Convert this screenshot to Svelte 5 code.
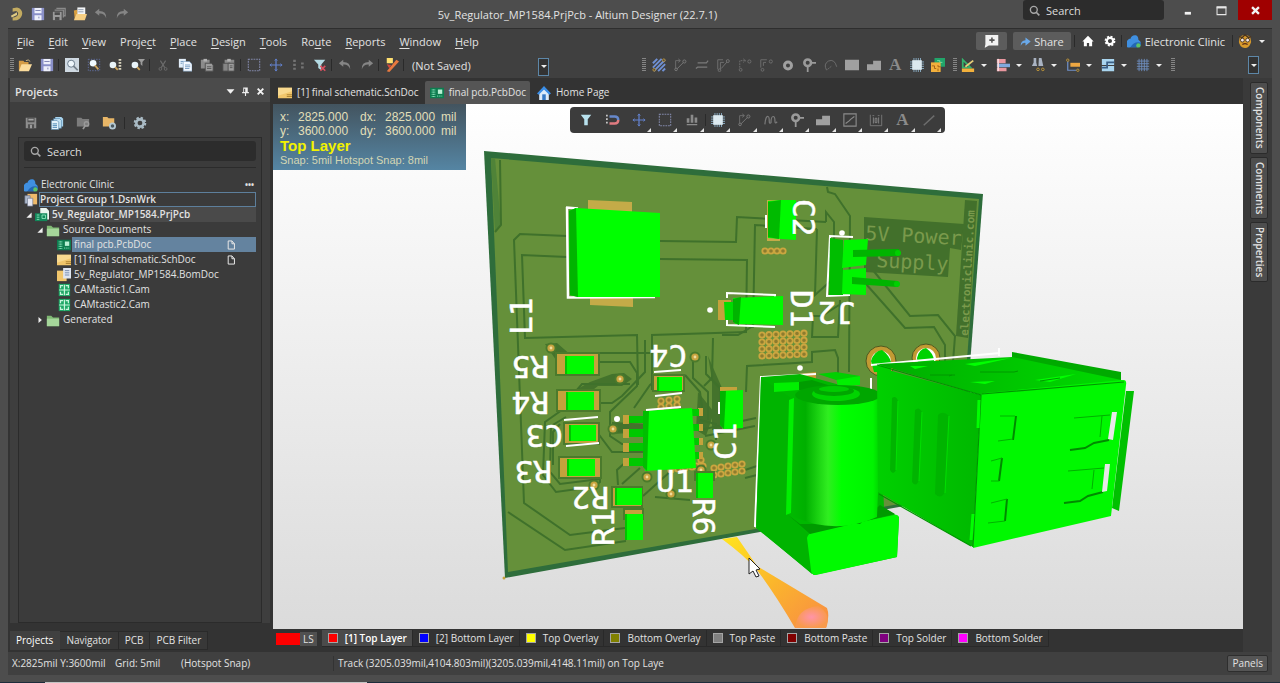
<script>
	const menus = [
		['', 'F', 'ile'], ['', 'E', 'dit'], ['', 'V', 'iew'], ['Proje', 'c', 't'], ['', 'P', 'lace'],
		['', 'D', 'esign'], ['', 'T', 'ools'], ['Ro', 'u', 'te'], ['', 'R', 'eports'], ['', 'W', 'indow'], ['', 'H', 'elp']
	];

	const quick = ['logo', 'save', 'saveall', 'openproj', 'undo', 'redo'];

	// '|' is a separator
	const mainTools = [
		'open', 'save', '|', 'preview', 'zoomarea', 'zoomsel', 'zoomfilter', '|', 'cut', 'copy', 'paste', 'pastespecial', '|',
		'select', 'move', 'deselect', 'clearfilter', '|', 'undo', 'redo', '|', 'wand', '|'
	];
	const placeTools = [
		'hatch', 'route', 'diffpair', 'multiroute', 'arcroute', 'arcroute2', 'pad', 'via', 'arc', 'rect', 'region', 'text', 'chip', 'board'
	];
	const dropTools = ['measure', 'align', 'find', 'dimension', 'room', 'grid'];
	const activeTools = [
		'filter', 'magnet', 'move', 'select', 'bars', '|', 'chip', 'route', 'tune', 'via', 'region', 'chart', 'dim', 'text', 'line'
	];

	const tree = [
		{ name: 'Electronic Clinic', icon: 'cloud', depth: 0, more: true },
		{ name: 'Project Group 1.DsnWrk', icon: 'group', depth: 0, kind: 'boxed' },
		{ name: '5v_Regulator_MP1584.PrjPcb', icon: 'project', depth: 0, arrow: 'open', kind: 'project' },
		{ name: 'Source Documents', icon: 'folder', depth: 1, arrow: 'open' },
		{ name: 'final pcb.PcbDoc', icon: 'pcb', depth: 3, kind: 'selected', doc: true },
		{ name: '[1] final schematic.SchDoc', icon: 'sch', depth: 3, doc: true },
		{ name: '5v_Regulator_MP1584.BomDoc', icon: 'bom', depth: 3 },
		{ name: 'CAMtastic1.Cam', icon: 'cam', depth: 3 },
		{ name: 'CAMtastic2.Cam', icon: 'cam', depth: 3 },
		{ name: 'Generated', icon: 'folder', depth: 1, arrow: 'closed' }
	];

	const docs = [
		{ name: '[1] final schematic.SchDoc', icon: 'sch' },
		{ name: 'final pcb.PcbDoc', icon: 'pcb' },
		{ name: 'Home Page', icon: 'homeblue' }
	];

	const layers = [
		{ name: '[1] Top Layer', color: '#ff0000' },
		{ name: '[2] Bottom Layer', color: '#0000ff' },
		{ name: 'Top Overlay', color: '#ffff00' },
		{ name: 'Bottom Overlay', color: '#808000' },
		{ name: 'Top Paste', color: '#808080' },
		{ name: 'Bottom Paste', color: '#800000' },
		{ name: 'Top Solder', color: '#800080' },
		{ name: 'Bottom Solder', color: '#ff00ff' }
	];

	const panelTabs = ['Projects', 'Navigator', 'PCB', 'PCB Filter'];
	const sideTabs = ['Components', 'Comments', 'Properties'];

	let activeDoc = $state(1);
	let activeLayer = $state(0);
	let activePanel = $state(0);

	// silkscreen designators, rotated around their own start point
	const silk = [
		['L1', 532, 335, -90], ['R5', 549, 356, 180], ['R4', 549, 392, 180], ['C3', 563, 425, 180],
		['R3', 552, 461, 180], ['R2', 609, 487, 180], ['R1', 614, 546, -90], ['C4', 687, 345, 180],
		['U1', 656, 492, 0], ['R6', 693, 498, 90], ['C1', 736, 460, -90], ['C2', 793, 199, 90],
		['D1', 791, 290, 90], ['J2', 855, 302, 180]
	];

	const traces = [
		'M500 160L501 225L495 232', 'M567 236L520 234L514 240L524 503L570 535L625 528', 'M567 257L522 255L525 338L637 335L638 385',
		'M508 512L565 550L626 541', 'M660 241L736 242L737 217L826 222', 'M660 259L747 260L746 331', 'M652 390V335L747 332',
		'M827 187L828 192L835 194L850 216L849 372', 'M817 229L815 295L834 278V222L826 212V222', 'M753 328L755 225L817 229',
		'M713 338L712 378L704 386', 'M722 335L738 335L753 326', 'M839 305L822 316H813L812 337L838 337L840 300',
		'M746 392L747 366L812 362V352L835 350L838 358V378', 'M868 264L910 316L938 315L955 336L953 362',
		'M866 284L905 328L934 327L945 345V362', 'M598 362H630L637 373V386L610 412V436L622 444H645',
		'M600 353H650', 'M560 352L568 357', 'M562 410L545 422L543 475L556 492L592 487', 'M566 417L551 426L550 472L560 484L600 479',
		'M553 465V432L560 424', 'M570 398L582 384H630', 'M600 403H612L622 396L645 372V340', 'M597 432L612 452H645',
		'M615 430L638 434', 'M618 485L617 470L628 460H645', 'M600 470V482L595 486', 'M622 484L640 468', 'M643 496L672 470',
		'M655 497L690 500', 'M634 408L650 385L662 376', 'M685 375L700 392L702 408', 'M693 360V378L708 392V420', 'M706 356V374L720 388V400',
		'M700 430L756 418', 'M705 436L755 426', 'M745 470L757 466', 'M745 478L757 475', 'M700 420L716 424V440'
	];

	const vias = [
		[551, 348], [620, 379], [613, 429], [647, 477], [695, 357], [711, 445], [671, 494], [594, 485], [701, 470]
	];

	const dots = [];
	for (let r = 0; r < 4; r++) for (let c = 0; c < 7; c++) dots.push([762 + c * 7, 335 + r * 7 - c * 0.3]);
	for (let c = 0; c < 4; c++) dots.push([765 + c * 6, 251]);
	for (let r = 0; r < 2; r++) for (let c = 0; c < 5; c++) dots.push([714 + c * 7, 468 + r * 7 - c]);
	for (let r = 0; r < 2; r++) for (let c = 0; c < 3; c++) dots.push([661 + c * 8, 401 + r * 6 - c]);
	for (let c = 0; c < 5; c++) dots.push([671 + c * 7, 470 - c]);
	dots.push([701, 460], [696, 466], [703, 466]);

	// small parts: pad rect, body rect
	const parts = [
		[[557, 354, 41, 20], [565, 356, 29, 18]], [[558, 391, 41, 19], [566, 392, 28, 18]],
		[[565, 424, 33, 19], [569, 425, 27, 16]], [[560, 458, 40, 19], [567, 459, 28, 17]],
		[[613, 488, 28, 18], [615, 488, 27, 17]], [[625, 510, 17, 8], [625, 514, 18, 26]],
		[[654, 376, 29, 14], [657, 377, 25, 14]], [[696, 473, 17, 6], [696, 473, 17, 25]]
	];
</script>

{#snippet icon(name)}
	<svg class="icon" viewBox="0 0 16 16" aria-hidden="true"><use href="#i-{name}" /></svg>
{/snippet}

{#snippet tool(name)}
	{#if name === '|'}
		<span class="sep"></span>
	{:else if name === 'text'}
		<button class="tool letter">A</button>
	{:else}
		<button class="tool" aria-label={name}>{@render icon(name)}</button>
	{/if}
{/snippet}

<svg class="sprite" aria-hidden="true">
	<symbol id="i-logo" viewBox="0 0 16 16"><path d="M3 1.500L8 .5C16 2 16 12 8 15L3 15.500V12C10 11.500 11 6 7 4.500L3 5.500Z" fill="#c3ab60" /><path d="M1 10L8 6V9L2 12Z" fill="#e0cb83" /></symbol>
	<symbol id="i-save" viewBox="0 0 16 16"><path d="M1 1H15V15H1Z" fill="#8a90c8" /><path d="M4 1H12V7H4ZM4 9.500H12V15H4Z" fill="#eef0fb" /><path d="M5 4H11M9 11V13" stroke="#767cae" /></symbol>
	<symbol id="i-savegrey" viewBox="0 0 16 16"><path d="M2 2H14V14H2Z" fill="#8d8d8d" /><path d="M4 2H12V7H4ZM4.500 9.500H11.500V14H4.500Z" fill="#505050" /><path d="M5 4H11M8 10V14" stroke="#a5a5a5" stroke-width="2" /></symbol>
	<symbol id="i-saveall" viewBox="0 0 16 16"><path d="M5 1.500H15V10H13M3 3.500H13V12" fill="none" stroke="#8b8b8b" stroke-width="1.500" /><path d="M1 5.500H11V15H1Z" fill="#9a9a9a" /><path d="M3 6H9V9H3ZM3.500 11.500H8.500V15H3.500Z" fill="#4c4c4c" /></symbol>
	<symbol id="i-openproj" viewBox="0 0 16 16"><path d="M1 4L5 3L6 14H2Z" fill="#d99f3f" /><path d="M5 .5H14V9H5Z" fill="#f4f6f8" /><path d="M6 3H12M6 5.500H12" stroke="#8b98a8" /><path d="M4 8H16L13.500 15H1Z" fill="#f7cf82" /></symbol>
	<symbol id="i-open" viewBox="0 0 16 16"><path d="M1 3H6L7.500 4.500H12V14H1Z" fill="#d39b45" /><path d="M9 3Q12 1 14 4" stroke="#d8c08a" fill="none" /><path d="M4 7H16L12.500 15H1Z" fill="#fbdc9c" /></symbol>
	<symbol id="i-undo" viewBox="0 0 16 16"><path d="M6 2L1 6L6 10V7.500Q12 7 14 13Q14.500 4.500 6 4.500Z" fill="#858585" /></symbol>
	<symbol id="i-redo" viewBox="0 0 16 16"><path d="M10 2L15 6L10 10V7.500Q4 7 2 13Q1.500 4.500 10 4.500Z" fill="#858585" /></symbol>
	<symbol id="i-preview" viewBox="0 0 16 16"><path d="M0 0H16V16H0Z" fill="#cfd9e2" /><circle cx="7" cy="6.500" r="4" fill="#eef6fb" stroke="#5d6f80" /><path d="M9.500 9L14.500 14" stroke="#75808a" stroke-width="2" /></symbol>
	<symbol id="i-zoomarea" viewBox="0 0 16 16"><path d="M1.500 1.500H14.500V14.500H1.500Z" fill="none" stroke="#6472a8" stroke-dasharray="1.500" /><circle cx="7" cy="6" r="3.800" fill="#f2fbff" /><path d="M9 8.500L13 13" stroke="#cfa65d" stroke-width="2" /></symbol>
	<symbol id="i-zoomsel" viewBox="0 0 16 16"><circle cx="4.500" cy="8" r="3.800" fill="#e9f4f9" /><path d="M7 10.500L10 13.500" stroke="#cfa65d" stroke-width="2" /><path d="M12.500 1V15" stroke="#d7d2bd" stroke-width="3" stroke-dasharray="2 1.500" /></symbol>
	<symbol id="i-zoomfilter" viewBox="0 0 16 16"><circle cx="4.500" cy="8" r="3.800" fill="#e9f4f9" /><path d="M7 10.500L10 13.500" stroke="#cfa65d" stroke-width="2" /><path d="M8 1H16L13 4.500V9L11 7V4.500Z" fill="#9d9d9d" /></symbol>
	<symbol id="i-cut" viewBox="0 0 16 16"><path d="M5 3L10 11M11 3L6 11" stroke="#6c6c6c" stroke-width="1.300" /><circle cx="5" cy="12.500" r="1.600" fill="none" stroke="#6c6c6c" /><circle cx="11" cy="12.500" r="1.600" fill="none" stroke="#6c6c6c" /></symbol>
	<symbol id="i-copy" viewBox="0 0 16 16"><path d="M1 1H9V11H1Z" fill="#e2eef9" /><path d="M6 4H13L16 7V15H6Z" fill="#f4f9ff" stroke="#6b93bb" stroke-width=".6" /><path d="M3 4H6M3 6H5M8 8H14M8 10H14M8 12H13" stroke="#6b93bb" /></symbol>
	<symbol id="i-paste" viewBox="0 0 16 16"><path d="M1 2H11V12H1Z" fill="#8b8b8b" /><path d="M4 1H8V4H4Z" fill="#b0b0b0" /><path d="M6 6H13L15 8V15H6Z" fill="#9d9d9d" stroke="#4c4c4c" /><path d="M8 10H13M8 12H13" stroke="#555" /></symbol>
	<symbol id="i-pastespecial" viewBox="0 0 16 16"><path d="M3 2H14V10H3Z" fill="#8b8b8b" /><path d="M6 1H10V4H6Z" fill="#b0b0b0" /><path d="M1 6H9V15H1Z" fill="#858585" stroke="#4c4c4c" /><path d="M7 6H14V15H7Z" fill="#9d9d9d" stroke="#4c4c4c" /><path d="M9 9H12M9 11H12" stroke="#555" /></symbol>
	<symbol id="i-select" viewBox="0 0 16 16"><path d="M1.500 1.500H14.500V14.500H1.500Z" fill="none" stroke="currentColor" stroke-width="1.200" stroke-dasharray="2 1" /></symbol>
	<symbol id="i-move" viewBox="0 0 16 16"><path d="M8 1.500V14.500M1.500 8H14.500" stroke="#6482cf" stroke-width="1.400" /><path d="M6.500 3L8 1L9.500 3M6.500 13L8 15L9.500 13M3 6.500L1 8L3 9.500M13 6.500L15 8L13 9.500" fill="none" stroke="#6482cf" /></symbol>
	<symbol id="i-deselect" viewBox="0 0 16 16"><path d="M4 2V15M13 5V14" stroke="#737373" stroke-width="3" stroke-dasharray="2.500 2" /></symbol>
	<symbol id="i-clearfilter" viewBox="0 0 16 16"><path d="M1 2H14L9.500 7.500V14L6 11.500V7.500Z" fill="#b4dbe4" /><path d="M8.500 9L14 14.500M14 9L8.500 14.500" stroke="#d9505f" stroke-width="1.800" /></symbol>
	<symbol id="i-wand" viewBox="0 0 16 16"><path d="M2 0H9V6H2Z" fill="#ffe070" /><path d="M16 4L13 2L2 15L5 16Z" fill="#e8793f" /><path d="M2 7L7 8L5 12Z" fill="#d34a3c" /></symbol>
	<symbol id="i-hatch" viewBox="0 0 16 16"><path d="M1 6L6 1M1 11L11 1M2 15L15 2M7 15L15 7M12 15L15 12" stroke="#6f90d4" stroke-width="2.200" /><circle cx="13.500" cy="2.500" r="1.500" fill="#404040" stroke="#c59a3a" /><circle cx="2.500" cy="13.500" r="1.500" fill="#404040" stroke="#c59a3a" /></symbol>
	<symbol id="i-route" viewBox="0 0 16 16"><path d="M3 13V3H8M6 1L8.500 3L6 5" fill="none" stroke="#717171" /><path d="M4 13L13 4" stroke="#7c7c7c" /><circle cx="13" cy="4" r="1.800" fill="#444" stroke="#7c7c7c" /><circle cx="3.500" cy="13" r="1.500" fill="#444" stroke="#7c7c7c" /></symbol>
	<symbol id="i-diffpair" viewBox="0 0 16 16"><path d="M3 5.500H13L15 3M1 12L3 10.500H14" fill="none" stroke="#7a7a7a" stroke-width="1.400" /></symbol>
	<symbol id="i-multiroute" viewBox="0 0 16 16"><path d="M2 13V2H8M5 13V5H9M6 12L13 4" fill="none" stroke="#757575" /><circle cx="13.500" cy="3.500" r="1.700" fill="#444" stroke="#757575" /><circle cx="4" cy="14" r="1.500" fill="#444" stroke="#757575" /></symbol>
	<symbol id="i-arcroute" viewBox="0 0 16 16"><path d="M2 11V3H8M6 1L9 3L6 5" fill="none" stroke="#717171" stroke-dasharray="2 1" /><circle cx="13" cy="4" r="1.800" fill="none" stroke="#717171" /><circle cx="3" cy="13.500" r="1.600" fill="none" stroke="#717171" /></symbol>
	<symbol id="i-arcroute2" viewBox="0 0 16 16"><path d="M2 11V2H9M5 9V5H8" fill="none" stroke="#717171" /><circle cx="13.500" cy="4" r="1.800" fill="none" stroke="#717171" /><circle cx="4" cy="13.500" r="1.600" fill="none" stroke="#717171" /></symbol>
	<symbol id="i-pad" viewBox="0 0 16 16"><circle cx="8" cy="8.500" r="4" fill="none" stroke="#a0a0a0" stroke-width="3.400" /></symbol>
	<symbol id="i-via" viewBox="0 0 16 16"><circle cx="6.500" cy="5.500" r="3.800" fill="none" stroke="#9a9a9a" stroke-width="3" /><path d="M10 5.500H16M6.500 9V16" stroke="#9a9a9a" stroke-width="2" /></symbol>
	<symbol id="i-arc" viewBox="0 0 16 16"><path d="M3 14Q-1 7 5 3.500Q12 .5 14.500 10" fill="none" stroke="#717171" /><path d="M4 13L9 9" stroke="#717171" stroke-dasharray="2 1" /></symbol>
	<symbol id="i-rect" viewBox="0 0 16 16"><path d="M0 2H16V14H0Z" fill="#a0a0a0" /></symbol>
	<symbol id="i-region" viewBox="0 0 16 16"><path d="M0 7H7V3H16V14H0Z" fill="#a0a0a0" /></symbol>
	<symbol id="i-chip" viewBox="0 0 16 16"><path d="M0 4.500H16M0 7H16M0 9.500H16M0 12H16M4.500 0V16M7 0V16M9.500 0V16M12 0V16" stroke="#8fb4cc" /><path d="M2.500 2.500H13.500V13.500H2.500Z" fill="#dce9ef" /></symbol>
	<symbol id="i-board" viewBox="0 0 16 16"><path d="M4 0H16V10H4Z" fill="#22a56a" /><path d="M7 3H10V5H13" stroke="#7fe0b0" fill="none" /><path d="M0 5H11V16H0Z" fill="#f3b03c" /><path d="M1 9H4V12H6M11 10H8V8M8 15V12" stroke="#9c5d14" fill="none" /></symbol>
	<symbol id="i-measure" viewBox="0 0 16 16"><path d="M2 2V11H11Z" fill="none" stroke="#35b26c" stroke-width="2" /><path d="M5 10L14 3" stroke="#e8cf7a" stroke-width="2" /><path d="M1 12H15V16H1Z" fill="#f3b13c" /></symbol>
	<symbol id="i-align" viewBox="0 0 16 16"><path d="M1 1H11V6H1ZM1 11H12V15H1Z" fill="#e9979f" /><path d="M1 6.500H16V10.500H1Z" fill="#7fa9dd" /><path d="M2.500 1V15" stroke="#f5d7da" stroke-width="2" /></symbol>
	<symbol id="i-find" viewBox="0 0 16 16"><path d="M3 0H6V5L7 9H1L3 5ZM9 0H12L14 9H8.500Z" fill="#a9b3c2" /><circle cx="8" cy="13" r="1.500" fill="none" stroke="#c59a3a" /><circle cx="13.500" cy="13" r="1.500" fill="none" stroke="#c59a3a" /></symbol>
	<symbol id="i-dimension" viewBox="0 0 16 16"><path d="M2 3V14H12" fill="none" stroke="#6f90c8" stroke-width="1.400" /><path d="M5 5.500H16V10H5Z" fill="#eea742" /><circle cx="2" cy="2.500" r="1.400" fill="#404040" stroke="#c59a3a" /><circle cx="13.500" cy="14" r="1.400" fill="#404040" stroke="#c59a3a" /></symbol>
	<symbol id="i-room" viewBox="0 0 16 16"><path d="M1 1H15V8H1ZM1 9H15V15H1Z" fill="#a9d5ef" /><path d="M15 5H7V11H1" stroke="#3b5f86" stroke-width="2" fill="none" /></symbol>
	<symbol id="i-grid" viewBox="0 0 16 16"><path d="M1 3.500H15M1 6.500H15M1 9.500H15M1 12.500H15M3.500 1V15M6.500 1V15M9.500 1V15M12.500 1V15" stroke="#6f8fc0" /></symbol>
	<symbol id="i-filter" viewBox="0 0 16 16"><path d="M2 2H14L10 7V14H6V7Z" fill="#b9e2ee" /></symbol>
	<symbol id="i-magnet" viewBox="0 0 16 16"><path d="M1 2V14" stroke="#c8c8c8" stroke-width="2" stroke-dasharray="2" /><path d="M4 4H10Q14 4 14 8" fill="none" stroke="#6688cc" stroke-width="2.800" /><path d="M14 8Q14 12 10 12H4" fill="none" stroke="#e07b80" stroke-width="2.800" /></symbol>
	<symbol id="i-bars" viewBox="0 0 16 16"><path d="M2 6H5V11H2ZM6.500 2H9.500V11H6.500ZM11 5H14V11H11ZM2 12.500H14V14H2Z" fill="#8b8b8b" /></symbol>
	<symbol id="i-tune" viewBox="0 0 16 16"><path d="M1 13Q2 3 4.500 4Q6 4 6 9Q6 13 8 11Q8 4 10.500 4Q12.500 4 12.500 9Q12.500 13 15 10" fill="none" stroke="#7b7b7b" stroke-width="1.400" /></symbol>
	<symbol id="i-chart" viewBox="0 0 16 16"><path d="M1 1H15V15H1Z" fill="none" stroke="#8b8b8b" stroke-width="1.300" /><path d="M3 12L7 9L9 7L13 4" stroke="#8b8b8b" stroke-width="1.400" fill="none" /></symbol>
	<symbol id="i-dim" viewBox="0 0 16 16"><path d="M1.500 2V14.500H14.500V2M4 3H6M10 3H12" fill="none" stroke="#7b7b7b" /><path d="M5 5V12M11 5V12M7 6H9V11H7Z" fill="none" stroke="#8b8b8b" /></symbol>
	<symbol id="i-line" viewBox="0 0 16 16"><path d="M2 14L14 3" stroke="#6d6d6d" stroke-width="1.600" /></symbol>
	<symbol id="i-search" viewBox="0 0 16 16"><circle cx="7" cy="7" r="5" fill="none" stroke="#a8a8a8" stroke-width="2" /><path d="M10.500 10.500L15 15" stroke="#a8a8a8" stroke-width="2.400" /></symbol>
	<symbol id="i-docs" viewBox="0 0 16 16"><path d="M6 1H13L15 3V12H6Z" fill="#a8d4ef" /><path d="M4 3H11L13 5V14H4Z" fill="#c4e4f6" stroke="#4b7da3" stroke-width=".7" /><path d="M1.500 5H8L10 7V15.500H1.500Z" fill="#e3f3fc" stroke="#4b7da3" stroke-width=".7" /><path d="M3 9H8M3 11H8M3 13H8" stroke="#3f7fae" /></symbol>
	<symbol id="i-foldergrey" viewBox="0 0 16 16"><path d="M1 2H6L7.500 3.500H15V12H1Z" fill="#7c7c7c" /><circle cx="12" cy="9" r="2.500" fill="none" stroke="#9a9a9a" stroke-width="1.600" /><path d="M10.500 11L8 15" stroke="#9a9a9a" stroke-width="2" /></symbol>
	<symbol id="i-foldergear" viewBox="0 0 16 16"><path d="M1 1H6L7.500 2.500H14V12H1Z" fill="#e8b667" /><circle cx="12" cy="11.500" r="3" fill="#4b5960" stroke="#b5c9d3" stroke-width="2" /></symbol>
	<symbol id="i-gear" viewBox="0 0 16 16"><circle cx="8" cy="8" r="6" fill="none" stroke="currentColor" stroke-width="2.400" stroke-dasharray="2.700 2" /><circle cx="8" cy="8" r="4.200" fill="none" stroke="currentColor" stroke-width="3" /></symbol>
	<symbol id="i-home" viewBox="0 0 16 16"><path d="M8 1L15.500 8.500H13.500V15H9.500V10.500H6.500V15H2.500V8.500H.5Z" fill="#fff" /></symbol>
	<symbol id="i-homeblue" viewBox="0 0 16 16"><path d="M2.500 8V16H13.500V8L8 3Z" fill="#dcebfa" /><path d="M8 0L16 8.500L14 10L8 4L2 10L0 8.500Z" fill="#3a8ee8" /><path d="M6 9.500H10V16H6Z" fill="#3678c4" /></symbol>
	<symbol id="i-cloud" viewBox="0 0 16 16"><path d="M4 15A4 4 0 0 1 1 7Q2 5 4 5.500Q5 1 10 1.500Q13 2.500 13 6.500Q16 8 16 11Q15 15 12 15Z" fill="#3f8fe0" /><path d="M4 15Q8 8 16 10Q16 15 12 15Z" fill="#2467b3" /><circle cx="13" cy="13" r="2.500" fill="#5dc266" /></symbol>
	<symbol id="i-share" viewBox="0 0 16 16"><path d="M1 14Q1 6.500 8 6V2L15.500 8L8 14V10Q3 9.500 1 14Z" fill="#6aa9ea" /></symbol>
	<symbol id="i-note" viewBox="0 0 16 16"><path d="M1 1H16V13H5L0 16L1 12Z" fill="#f2f2f2" /><path d="M8.500 4V10M5.500 7H11.500" stroke="#555" stroke-width="1.800" /></symbol>
	<symbol id="i-face" viewBox="0 0 16 16"><path d="M2 3Q8 -1 14 3L15 9Q13 16 8 16Q2 15 1 9Z" fill="#d99a2b" /><path d="M1 3L5 4L8 1L12 4L15 3" stroke="#4a3520" stroke-width="1.600" fill="none" /><circle cx="5" cy="7" r="2.200" fill="#f6e8e6" stroke="#40301c" /><circle cx="11" cy="7" r="2.200" fill="#f6e8e6" stroke="#40301c" /><path d="M5 12Q8 10 11 12" stroke="#5a2c16" fill="none" stroke-width="1.400" /></symbol>
	<symbol id="i-group" viewBox="0 0 16 16"><path d="M4 1H15V13H4Z" fill="#eeba6a" /><path d="M1 3H7V12H1Z" fill="#aeb9cc" stroke="#68718a" stroke-width=".7" /><path d="M4 6H10V15H4Z" fill="#e4e7f2" stroke="#68718a" stroke-width=".7" /></symbol>
	<symbol id="i-project" viewBox="0 0 16 16"><path d="M6 0H13L16 3V13H6Z" fill="#eaf4ee" /><path d="M0 6H14V15H0Z" fill="#13875a" /><path d="M2 8H5M2 10.500H5M2 13H5M8 8H12V12H8Z" stroke="#8de6bd" fill="none" /></symbol>
	<symbol id="i-folder" viewBox="0 0 16 16"><path d="M1 3H6L8 5H15V15H1Z" fill="#7fb873" /><path d="M1 6.500H15V15H1Z" fill="#a5d69a" /></symbol>
	<symbol id="i-pcb" viewBox="0 0 16 16"><path d="M0 2H16V14H0Z" fill="#0d7c4f" /><path d="M2 4.500H6M2 7H6M2 9.500H6M2 12H6" stroke="#8de6bd" stroke-width="1.300" stroke-dasharray="1 .5" /><path d="M9 4H14V9H9Z" fill="#b9f0d4" /><path d="M8 11.500H14" stroke="#8de6bd" stroke-dasharray="1.500 1" /></symbol>
	<symbol id="i-sch" viewBox="0 0 16 16"><path d="M0 2H16V14H0Z" fill="#f1c66b" /><path d="M0 2H16V6L0 11Z" fill="#f8d98f" /><path d="M10 10H16M10 12H16" stroke="#a57b2c" /></symbol>
	<symbol id="i-bom" viewBox="0 0 16 16"><path d="M0 3H11V15H0Z" fill="#f1c66b" /><path d="M7 0H16V12H7Z" fill="#dfe6f1" /><path d="M9 3H14M9 5.500H14M9 8H14" stroke="#6d83a8" /></symbol>
	<symbol id="i-cam" viewBox="0 0 16 16"><path d="M2 1H15V15H2Z" fill="#1fa765" /><path d="M4 6V3H7M10 3H13V6M4 10V13H7M13 10V13H10" fill="none" stroke="#c8f5dc" stroke-width="1.400" /><path d="M8.500 2V14M2.500 8H14.500" stroke="#c8f5dc" stroke-width="1.400" /></symbol>
	<symbol id="i-doc" viewBox="0 0 16 16"><path d="M3.500 1.500H9.500L13.500 6V14.500H3.500ZM9.500 1.500V6H13.500" fill="none" stroke="#e6e6e6" stroke-width="1.600" /></symbol>
	<symbol id="i-pin" viewBox="0 0 16 16"><path d="M4 1H12V9H14V11H9V16H7V11H2V9H4Z" fill="#eee" /><path d="M6.500 3V9" stroke="#4b4b4b" stroke-width="2" /></symbol>
	<symbol id="i-close" viewBox="0 0 16 16"><path d="M3 3L13 13M13 3L3 13" stroke="#f2f2f2" stroke-width="3.400" /></symbol>
	<symbol id="i-down" viewBox="0 0 16 16"><path d="M1 4H15L8 12Z" fill="#f2f2f2" /></symbol>
	<symbol id="i-min" viewBox="0 0 16 16"><path d="M4 12H13" stroke="#f2f2f2" stroke-width="4" /></symbol>
	<symbol id="i-max" viewBox="0 0 16 16"><path d="M1.500 3V14H14.500V3Z" fill="none" stroke="#e6e6e6" stroke-width="1.500" /><path d="M1 3.500H15" stroke="#e6e6e6" stroke-width="3" /></symbol>
	<symbol id="i-open-arrow" viewBox="0 0 16 16"><path d="M15 1V15H1Z" fill="#f0f0f0" /></symbol>
	<symbol id="i-closed-arrow" viewBox="0 0 16 16"><path d="M4 0L13 8L4 16Z" fill="#f0f0f0" /></symbol>
</svg>

<div class="window">
	<header class="titlebar">
		<div class="quick">
			{#each quick as name}{@render tool(name)}{/each}
		</div>
		<h1>5v_Regulator_MP1584.PrjPcb - Altium Designer (22.7.1)</h1>
		<label class="search top-search">
			{@render icon('search')}
			<input type="text" placeholder="Search" aria-label="Search everywhere" />
		</label>
		<div class="win-buttons">
			<button aria-label="Minimize">{@render icon('min')}</button>
			<button aria-label="Maximize">{@render icon('max')}</button>
			<button class="win-close" aria-label="Close">{@render icon('close')}</button>
		</div>
	</header>

	<div class="app">
		<nav class="menubar">
			{#each menus as [a, key, b]}
				<button class="menu">{a}<u>{key}</u>{b}</button>
			{/each}
			<div class="account">
				<button class="pill" aria-label="Comment">{@render icon('note')}</button>
				<button class="pill share">{@render icon('share')} Share</button>
				<span class="sep"></span>
				<button class="tool" aria-label="Home">{@render icon('home')}</button>
				<button class="tool" aria-label="Settings">{@render icon('gear')}</button>
				<span class="sep"></span>
				<button class="server">{@render icon('cloud')} Electronic Clinic</button>
				<span class="sep"></span>
				<button class="user" aria-label="User">{@render icon('face')}<span class="caret"></span></button>
			</div>
		</nav>

		<div class="toolbar">
			<span class="grip"></span>
			<div class="tools">
				{#each mainTools as name}{@render tool(name)}{/each}
			</div>
			<label class="combo">
				<select aria-label="View">
					<option>(Not Saved)</option>
				</select>
				<span class="combo-arrow"><span class="caret"></span></span>
			</label>
			<div class="right-tools">
				<span class="grip"></span>
				<div class="place">
					{#each placeTools as name}{@render tool(name)}{/each}
				</div>
				<span class="grip"></span>
				<div class="drops">
					{#each dropTools as name}
						<button class="drop" aria-label={name}>{@render icon(name)}<span class="caret"></span></button>
					{/each}
				</div>
				<span class="grip"></span>
			</div>
			<button class="combo-arrow" aria-label="More"><span class="caret"></span></button>
		</div>

		<div class="work">
			<aside class="panel">
				<div class="panel-head">
					<h2>Projects</h2>
					<button aria-label="Menu">{@render icon('down')}</button>
					<button aria-label="Pin">{@render icon('pin')}</button>
					<button aria-label="Close panel">{@render icon('close')}</button>
				</div>
				<div class="panel-body">
					<div class="panel-tools">
						{@render tool('savegrey')}
						{@render tool('docs')}
						{@render tool('foldergrey')}
						{@render tool('foldergear')}
						<span class="sep"></span>
						{@render tool('gear')}
					</div>
					<div class="panel-box">
						<label class="search">
							{@render icon('search')}
							<input type="text" placeholder="Search" aria-label="Search projects" />
						</label>
						<ul class="tree">
							{#each tree as row}
								<li style="padding-left: {row.depth * 11}px">
									{#if row.arrow}
										<span class="twist">{@render icon(row.arrow + '-arrow')}</span>
									{/if}
									{@render icon(row.icon)}
									<span class="name {row.kind}">
										{row.name}
										{#if row.doc}{@render icon('doc')}{/if}
										{#if row.more}<b>•••</b>{/if}
									</span>
								</li>
							{/each}
						</ul>
					</div>
				</div>
				<div class="panel-tabs">
					{#each panelTabs as name, i}
						<button class:active={activePanel === i} onclick={() => (activePanel = i)}>{name}</button>
					{/each}
				</div>
			</aside>

			<main>
				<div class="doc-tabs">
					{#each docs as doc, i}
						<button class:active={activeDoc === i} onclick={() => (activeDoc = i)}>{@render icon(doc.icon)}{doc.name}</button>
					{/each}
				</div>

				<div class="canvas">
					<svg class="scene" viewBox="273 104 970 524" preserveAspectRatio="xMinYMin meet" role="img" aria-label="3D view of the board">
						<defs>
							<linearGradient id="cyl"><stop offset="0" stop-color="#00b800" /><stop offset=".15" stop-color="#00b000" /><stop offset=".4" stop-color="#30ee20" /><stop offset=".55" stop-color="#00ff00" /><stop offset=".9" stop-color="#00f400" /><stop offset="1" stop-color="#00c800" /></linearGradient>
							<linearGradient id="cone" x1="0" y1="0" x2="1" y2="1"><stop offset="0" stop-color="#ffe51e" /><stop offset=".5" stop-color="#fbb52c" /><stop offset="1" stop-color="#f88b45" /></linearGradient>
							<radialGradient id="tip"><stop offset="0" stop-color="#ff94a8" /><stop offset="1" stop-color="#f99a4c" /></radialGradient>
							<linearGradient id="side"><stop offset="0" stop-color="#00d000" /><stop offset="1" stop-color="#00b800" /></linearGradient>
							<linearGradient id="lid"><stop offset="0" stop-color="#00ac00" /><stop offset="1" stop-color="#00dc00" /></linearGradient>
						</defs>

						<!-- board and copper -->
						<path d="M484 151L983 194L960 496L505 578Z" fill="#2e6d3b" />
						<path d="M491 158L979 199L957 494L508 572Z" fill="#65903a" />
						<path d="M491 158L495 158L501 226L495 232Z" fill="#4f8338" />
						<path d="M612 374L624 373L632 379L622 386H598L585 396H565L590 382ZM612 422L650 424V432L612 434ZM545 344L557 343L572 356L556 360ZM698 392L714 412L706 436L696 430ZM708 356L722 388V430H712V380Z" fill="#44732c" />
						<g fill="none" stroke="#3f712b" stroke-width="2">
							{#each traces as d}<path {d} />{/each}
						</g>

						<!-- copper legend -->
						<path d="M864 217L964 224L961 250L950 248L948 277L864 272Z" fill="#42702b" />
						<path d="M965 200L977 201L968 338L956 336Z" fill="#42702b" />
						<g font-family="DejaVu Sans Mono, monospace" fill="#7a9a4c">
							<text x="865" y="240" font-size="20" transform="rotate(3 865 240)">5V Power</text>
							<text x="876" y="267" font-size="20" transform="rotate(3 876 267)">Supply</text>
							<text x="968" y="336" font-size="11" font-weight="bold" transform="rotate(-87 968 336)">electroniclinic.com</text>
						</g>

						<g fill="#8d7c2e" stroke="#cba640" stroke-width="1.800">
							{#each dots as [x, y]}<circle cx={x} cy={y} r="2.700" />{/each}
						</g>
						{#each vias as [x, y]}
							<circle cx={x} cy={y} r="5.500" fill="#4b7a2c" /><circle cx={x} cy={y} r="3.600" fill="#c9a440" /><circle cx={x} cy={y} r="1.400" fill="#f0dc9c" />
						{/each}
						<circle cx="881" cy="361" r="15" fill="#c29a33" stroke="#4d5a20" /><circle cx="881" cy="361" r="10" fill="#fff" /><path d="M871 361Q874 351 882 350Q889 355 891 362V372H874Z" fill="#00d200" />
						<circle cx="926" cy="358" r="14" fill="#c29a33" stroke="#4d5a20" /><circle cx="926" cy="358" r="10" fill="#fff" /><path d="M917 358Q919 349 926 348Q933 353 934 360V366H918Z" fill="#00d200" />
						<path d="M780 376L816 372V380H782ZM878 470V500L884 496Z" fill="#c29a33" />

						<!-- small parts -->
						{#each parts as [pad, body]}
							<rect x={pad[0] - 2} y={pad[1] - 2} width={pad[2] + 4} height={pad[3] + 4} fill="#4b7a2c" />
							<rect x={pad[0]} y={pad[1]} width={pad[2]} height={pad[3]} fill="#c4a23c" />
							<rect x={body[0]} y={body[1]} width={body[2]} height={body[3]} fill="#00fa00" />
							<rect x={body[0]} y={body[1]} width="2" height={body[3]} fill="#00c400" />
						{/each}

						<path d="M588 200L632 202V213H588ZM590 295L633 296V307L590 305Z" fill="#c4ab48" />
						<path d="M566 207.500L578 208.500M567 207L568 297.500L655 297" fill="none" stroke="#fff" stroke-width="2.500" />
						<path d="M569 211L576 208L660 213V297H578L570 295Z" fill="#00ff00" /><path d="M569 211L576 208L578 297L570 295Z" fill="#00b400" />

						<path d="M767 200H780V241H767Z" fill="#c4ab48" /><path d="M766 215V228" stroke="#fff" stroke-width="2" />
						<path d="M768 201L781 200H796V240L768 238Z" fill="#00fa00" /><path d="M768 202L781 200L779 239L768 237Z" fill="#00ba00" />

						<path d="M727 298V293L775 295V299M727 320V325L775 327" fill="none" stroke="#fff" stroke-width="2" />
						<path d="M718 300H731V320H718Z" fill="#c4a23c" /><path d="M724 302H734V320H725Z" fill="#00dc00" />
						<path d="M733 298L783 296V325L735 324Z" fill="#00fa00" /><path d="M733 299L741 297L739 325L733 322Z" fill="#00b400" />

						<path d="M853 237L830 236L827 296L850 295" fill="none" stroke="#fff" stroke-width="2" />
						<path d="M830 238L843 240V295H829Z" fill="#00bd00" /><path d="M844 240L868 239L866 265L842 268ZM843 270L866 268V295L842 294Z" fill="#00f400" />
						<path d="M853 250L899 249V256L853 257ZM852 277L898 281V287L852 284Z" fill="#00b400" /><circle cx="898" cy="253" r="3" fill="#00d000" /><circle cx="897" cy="284" r="3" fill="#00d000" />

						<path d="M720 387H737V392H720Z" fill="#c4a23c" /><path d="M719 402V414" stroke="#fff" stroke-width="2" />
						<path d="M720 391L743 390V428L724 429L720 425Z" fill="#00fa00" /><path d="M720 391L726 391L724 429L720 425Z" fill="#00b400" />

						<path d="M623 415H629V424H623ZM623 429H629V438H623ZM623 443H629V452H623ZM623 458H629V466H623ZM698 408H703V416H698ZM698 424H703V431H698ZM698 438H703V445H698ZM698 452H703V459H698Z" fill="#c4a23c" />
						<path d="M629 416H644V423H629ZM629 429H644V437H629ZM629 443H644V451H629ZM629 458H644V466H629ZM692 409H699V416H692ZM692 424H699V431H692ZM692 438H699V445H692ZM692 452H699V459H692Z" fill="#00c800" />
						<path d="M643 411L692 408L696 468L645 471Z" fill="#00ff00" /><path d="M643 411L649 411L647 471L643 467Z" fill="#00be00" />

						<g fill="none" stroke="#fff" stroke-width="2">
							<path d="M564 420L598 417M566 446L599 443M654 372L681 370M655 396L682 393M646 410L681 407" />
							<path d="M816 374L761 377L755 526L760 528M871 393V378M871 365L1000 353M999 348V356" />
						</g>
						<g fill="#fff">
							<circle cx="710" cy="310" r="2.800" /><circle cx="842" cy="233" r="2.800" /><circle cx="800" cy="368" r="2.800" /><circle cx="617" cy="419" r="3" />
						</g>
						<g fill="#fff" stroke="#fff" stroke-width=".5" font-family="DejaVu Sans Mono, monospace" font-size="31">
							{#each silk as [label, x, y, a]}
								<text {x} {y} transform="rotate({a} {x} {y})">{label}</text>
							{/each}
						</g>

						<!-- barrel jack -->
						<path d="M761 377L800 374L880 396L884 508L899 517L897 557L814 575L756 528Z" fill="#00b800" />
						<path d="M761 378L790 397L787 514L809 535L812 574L757 528Z" fill="#00b400" />
						<path d="M774 383L799 382V390L774 392ZM836 378L860 376V385L838 387Z" fill="#00f000" />
						<path d="M789 400L794 398L791 513L786 515Z" fill="#00f000" />
						<path d="M818 374L836 372L860 376L836 380Z" fill="#00d000" />
						<path d="M799 382L812 380L850 392L830 396L799 390Z" fill="#009c00" />
						<path d="M807 538Q808 533 814 532L894 515Q899 514 899 519L897 557L816 575Q811 575 811 570Z" fill="#00fa00" />
						<path d="M787 514L800 524H860L880 505L895 514L810 534Z" fill="#009a00" />
						<path d="M795 397Q835 412 882 396L877 517Q835 536 792 516Z" fill="url(#cyl)" />
						<ellipse cx="838" cy="395" rx="43" ry="10" fill="#00a600" /><ellipse cx="836" cy="394" rx="24" ry="7" fill="#00d400" /><ellipse cx="834" cy="391" rx="20" ry="5" fill="#00a600" /><ellipse cx="834" cy="389" rx="15" ry="3" fill="#00cc00" />

						<!-- USB connector -->
						<path d="M1012 352L1121 372V385L1012 364Z" fill="#00aa00" />
						<path d="M1126 391H1134L1119 511L1112 508Z" fill="#00c000" />
						<path d="M877 364L1012 357L1126 381L981 395Z" fill="url(#lid)" />
						<path d="M877 367L981 395L973 547L960 540L878 492Z" fill="url(#side)" />
						<path d="M985 393L1123 380Q1127 380 1126 385L1111 516L973 548L981 395Z" fill="#00f800" />
						<path d="M877 365L981 395L973 547M879 494L971 546M982 394L1124 382" fill="none" stroke="#009600" stroke-width="1.200" />
						<path d="M965 364L1011 358L975 366ZM1035 380L1076 374L1050 382ZM970 382L995 381L985 384ZM910 366H928L915 369Z" fill="#00ff00" />
						<path d="M980 372H1014L1018 371M930 375H955M949 376L952 375M1040 381L1060 378" stroke="#009800" fill="none" />
						<path d="M892 398L890 470Q893 476 896 470L898 401Q896 395 892 398ZM915 410L912 482Q916 488 919 480L922 412Q919 406 915 410ZM938 415L935 494Q941 500 945 492L949 416Q943 410 938 415Z" fill="#00b400" />
						<path d="M898 401L896 470M922 412L919 481M949 416L945 493" stroke="#00e000" />
						<path d="M979 400L978 428M973 514L971 540" stroke="#00ff00" stroke-width="3" />
						<path d="M1016 416L1013 440M1002 458L999 481M1007 499L1005 521" fill="none" stroke="#008a00" stroke-width="2" />
						<path d="M1000 416H1015M998 441L1013 439M991 461L1002 458M991 481L999 481M991 503L1007 499M988 523L1005 521" fill="none" stroke="#00b400" />
						<path d="M1074 418L1110 415M1102 416L1100 437M1068 471L1104 468M1094 470L1092 489" fill="none" stroke="#00b000" />
						<path d="M1070 450L1085 448L1094 443L1109 440M1064 503L1080 501L1088 496L1103 492" fill="none" stroke="#008a00" stroke-width="2" />
						<path d="M1112 412H1117L1113 440L1108 439ZM1105 464H1110L1107 491L1102 492Z" fill="#e8e8e8" />

						<!-- light cone and pointer -->
						<path d="M722 539L737 537L757 566L827 608Q830 616 826 628H795Q775 594 757 570Q745 556 722 539Z" fill="url(#cone)" />
						<path d="M795 628Q797 608 818 606Q832 614 826 628Z" fill="url(#tip)" />
						<path d="M749 558V574L753 571L756 577L759 576L756 570L760 569Z" fill="#fff" stroke="#222" />
						<circle cx="504" cy="578" r="1.500" fill="#c4a23c" />
					</svg>

					<div class="hud">
						<dl>
							<dt>x:</dt><dd>2825.000</dd><dt>dx:</dt><dd>2825.000</dd><dd>mil</dd>
							<dt>y:</dt><dd>3600.000</dd><dt>dy:</dt><dd>3600.000</dd><dd>mil</dd>
						</dl>
						<strong>Top Layer</strong>
						<p>Snap: 5mil Hotspot Snap: 8mil</p>
					</div>

					<div class="active-bar">
						{#each activeTools as name}{@render tool(name)}{/each}
					</div>
				</div>

				<div class="layer-tabs">
					<span class="current"></span>
					<button class="ls">LS</button>
					{#each layers as layer, i}
						<button class="layer" class:active={activeLayer === i} onclick={() => (activeLayer = i)}>
							<span class="swatch" style="background: {layer.color}"></span>{layer.name}
						</button>
					{/each}
				</div>
			</main>

			<aside class="side">
				{#each sideTabs as name}<button>{name}</button>{/each}
			</aside>
		</div>

		<footer class="status">
			<span class="coords">X:2825mil Y:3600mil</span>
			<span class="snap-grid">Grid: 5mil</span>
			<span class="hotspot">(Hotspot Snap)</span>
			<span class="info">Track (3205.039mil,4104.803mil)(3205.039mil,4148.11mil) on Top Laye</span>
			<button>Panels</button>
		</footer>
	</div>
	<div class="desk"><span></span></div>
</div>

<style>
	:global(body) {
		margin: 0;
		background: #4d4d4d;
	}
	.window {
		display: flex;
		flex-direction: column;
		height: 100vh;
		overflow: hidden;
		background: #4d4d4d;
		color: #e2e2e2;
		font: 10px/15px "Open Sans", "Noto Sans", sans-serif;
	}
	.window * {
		box-sizing: border-box;
	}
	.sprite {
		position: absolute;
		width: 0;
		height: 0;
	}
	button, select, input {
		margin: 0;
		padding: 0;
		border: 0;
		background: none;
		color: inherit;
		font: inherit;
		white-space: nowrap;
	}
	h1, h2, p, dl, dd, ul {
		margin: 0;
		padding: 0;
	}
	.icon {
		display: block;
		flex: none;
		width: 14px;
		height: 14px;
	}
	.tool {
		display: flex;
		align-items: center;
		justify-content: center;
		flex: none;
		width: 22px;
		height: 20px;
		color: #8187a8;
	}
	.letter {
		color: #8b8b8b;
		font: bold 17px/20px "Liberation Serif", serif;
	}
	.sep {
		flex: none;
		width: 3px;
		height: 12px;
		border-left: 1px solid #2a2a2a;
	}
	.caret {
		border: 3px solid transparent;
		border-top-color: #eee;
		border-bottom: 0;
	}
	.grip {
		flex: none;
		width: 4px;
		height: 14px;
		background: repeating-linear-gradient(#858585 0 1px, transparent 1px 2px);
	}

	.titlebar {
		display: flex;
		flex: none;
		height: 28px;
		padding: 0 8px 0 6px;
	}
	.quick {
		display: flex;
		align-items: center;
		width: 126px;
	}
	.quick .tool {
		flex: 1;
	}
	h1 {
		flex: 1;
		font-size: 11px;
		font-weight: 400;
		line-height: 30px;
		text-align: center;
	}
	.search {
		display: flex;
		align-items: center;
		gap: 6px;
		height: 20px;
		padding: 0 6px;
		border-radius: 3px;
		background: #2c2c2c;
		font-size: 11px;
	}
	.search .icon {
		width: 11px;
		height: 11px;
	}
	.search input {
		flex: 1;
		min-width: 0;
		outline: 0;
	}
	.search input::placeholder {
		color: #dcdcdc;
		opacity: 1;
	}
	.top-search {
		width: 141px;
	}
	.win-buttons {
		display: flex;
		width: 108px;
		height: 20px;
		padding-left: 6px;
	}
	.win-buttons button {
		display: flex;
		flex: 1;
		align-items: center;
		justify-content: center;
	}
	.win-buttons .icon {
		width: 11px;
		height: 11px;
	}
	.win-buttons .win-close {
		background: #a00000;
	}

	.app {
		display: flex;
		flex: 1;
		flex-direction: column;
		min-height: 0;
		margin: 0 8px;
		border-top: 1px solid #2e2e2e;
		background: #404040;
	}
	.menubar {
		display: flex;
		align-items: center;
		flex: none;
		gap: 14px;
		height: 24px;
		padding-left: 9px;
		font-size: 11px;
	}
	.menu u {
		text-underline-offset: 2px;
	}
	.account {
		display: flex;
		align-items: center;
		margin-left: auto;
		padding-right: 3px;
	}
	.pill {
		display: flex;
		align-items: center;
		justify-content: center;
		gap: 3px;
		height: 18px;
		margin-right: 6px;
		padding: 0 7px;
		border-radius: 2px;
		background: #5c5c5c;
	}
	.pill .icon {
		width: 17px;
		height: 14px;
	}
	.share {
		margin-right: 3px;
	}
	.share .icon {
		width: 11px;
		height: 11px;
	}
	.account .tool .icon {
		width: 12px;
		height: 12px;
	}
	.account .tool {
		color: #fff;
	}
	.server, .user {
		display: flex;
		align-items: center;
		gap: 4px;
		padding: 0 7px 0 3px;
	}
	.user {
		gap: 7px;
		padding-right: 4px;
	}
	.toolbar {
		display: flex;
		align-items: center;
		flex: none;
		height: 25px;
		padding: 0 13px 1px 2px;
	}
	.tools, .right-tools, .place, .drops {
		display: flex;
		align-items: center;
	}
	.combo {
		position: relative;
		display: flex;
		width: 143px;
		font-size: 11px;
	}
	.combo select {
		flex: 1;
		padding-left: 6px;
		appearance: none;
		outline: 0;
	}
	.combo-arrow {
		display: flex;
		align-items: center;
		justify-content: center;
		width: 11px;
		height: 18px;
		border: 1px solid #5d87a8;
		background: #333;
	}
	.combo .combo-arrow {
		position: absolute;
		right: 0;
		pointer-events: none;
	}
	.right-tools {
		margin-left: auto;
		margin-right: 73px;
	}
	.place {
		width: 307px;
		padding: 0 4px 0 2px;
	}
	.place .tool {
		flex: 1;
		min-width: 0;
	}
	.drops {
		width: 214px;
		padding-left: 4px;
	}
	.drop {
		display: flex;
		flex: 1;
		align-items: center;
		gap: 6px;
	}

	.work {
		display: flex;
		flex: 1;
		min-height: 0;
		background: #333;
	}
	.panel {
		display: flex;
		flex: none;
		flex-direction: column;
		width: 262px;
		margin-right: 3px;
		padding-left: 2px;
	}
	.panel-head {
		display: flex;
		align-items: center;
		flex: none;
		gap: 6px;
		height: 24px;
		padding: 2px 5px 0;
		background: #4b4b4b;
	}
	.panel-head h2 {
		flex: 1;
		font-size: 11px;
		font-weight: 600;
	}
	.panel-head .icon {
		width: 9px;
		height: 9px;
	}
	.panel-body {
		display: flex;
		flex: 1;
		flex-direction: column;
		padding: 0 8px;
		background: #3e3e3e;
	}
	.panel-tools {
		display: flex;
		align-items: center;
		flex: none;
		gap: 4px;
		height: 35px;
		padding: 6px 2px 0;
	}
	.panel-tools .tool {
		color: #a9bac4;
	}
	.panel-tools .sep {
		width: 1px;
	}
	.panel-box {
		flex: 1;
		padding: 3px 5px;
		border: 1px solid #2b2b2b;
		background: #3b3b3b;
	}
	.tree {
		margin-top: 6px;
		padding-top: 9px;
		border-top: 1px solid #2b2b2b;
		list-style: none;
	}
	.tree li {
		display: flex;
		align-items: center;
		height: 15px;
	}
	.twist {
		width: 11px;
		padding-left: 2px;
	}
	.twist .icon {
		width: 6px;
		height: 6px;
	}
	.name {
		display: flex;
		flex: 1;
		align-items: center;
		justify-content: space-between;
		height: 15px;
		margin-left: 1px;
		padding: 0 20px 0 2px;
		white-space: nowrap;
	}
	.name .icon {
		width: 10px;
		height: 10px;
	}
	.name b {
		margin-right: -18px;
		font-size: 8px;
	}
	.boxed {
		padding-left: 0;
		border: 1px solid #5d7f9c;
		font-weight: 600;
	}
	.project {
		background: #4a4a4a;
		font-weight: 600;
	}
	.selected {
		background: #64839f;
	}
	.panel-tabs {
		display: flex;
		flex: none;
		height: 29px;
		padding: 8px 0 2px;
	}
	.panel-tabs button {
		padding: 0 6px;
		border: 1px solid #2a2a2a;
		border-left-width: 0;
		background: #383838;
	}
	.panel-tabs .active {
		border-color: #404040;
		background: #404040;
		color: #fff;
	}

	main {
		display: flex;
		flex: 1;
		flex-direction: column;
		min-width: 0;
	}
	.doc-tabs {
		display: flex;
		align-items: flex-end;
		flex: none;
		height: 26px;
	}
	.doc-tabs button {
		display: flex;
		align-items: center;
		gap: 5px;
		height: 23px;
		margin-right: 2px;
		padding: 0 4px 0 5px;
	}
	.doc-tabs .active {
		border-radius: 2px 2px 0 0;
		background: #555;
	}
	.canvas {
		position: relative;
		flex: 1;
		min-height: 0;
		background: linear-gradient(#fff, #dbdbdb);
	}
	.scene {
		display: block;
		width: 100%;
		height: 100%;
	}
	.hud {
		position: absolute;
		top: 0;
		left: 0;
		width: 193px;
		height: 66px;
		padding: 6px 7px;
		background: linear-gradient(#43545f, #5585a3);
		color: #e2dfb8;
		font: 12px/14px "Liberation Sans", sans-serif;
	}
	.hud dl {
		display: grid;
		grid-template-columns: 18px 62px 25px 56px auto;
	}
	.hud strong {
		display: block;
		color: #f2f200;
		font-size: 15px;
		line-height: 16px;
	}
	.hud p {
		color: #d2d5b4;
		font-size: 11px;
		line-height: 13px;
	}
	.active-bar {
		position: absolute;
		top: 3px;
		left: 297px;
		display: flex;
		align-items: center;
		width: 375px;
		height: 26px;
		padding: 0 3px;
		border-radius: 4px;
		background: #3c3c3c;
	}
	.active-bar .tool {
		position: relative;
		flex: 1;
		height: 26px;
	}
	.active-bar .sep {
		width: 1px;
		margin-right: -1px;
	}
	.active-bar .tool:nth-child(n + 3)::after {
		position: absolute;
		right: 1px;
		bottom: 1px;
		border: 2px solid #e4e4e4;
		border-top-color: transparent;
		border-left-color: transparent;
		content: "";
	}
	.layer-tabs {
		display: flex;
		flex: none;
		height: 23px;
		padding: 1px 0 5px 3px;
	}
	.current {
		width: 24px;
		height: 12px;
		margin-top: 3px;
		background: #ff0000;
	}
	.ls {
		height: 14px;
		margin: 2px 5px 0 0;
		padding: 0 3px;
		background: #505050;
		line-height: 14px;
	}
	.layer {
		display: flex;
		align-items: center;
		gap: 7px;
		padding: 0 5px 0 6px;
		border-right: 1px solid #292929;
		border-bottom: 1px solid #292929;
	}
	.layer.active {
		background: #4b4b4b;
		color: #fff;
		font-weight: 600;
	}
	.swatch {
		width: 10px;
		height: 10px;
		border: 1px solid #a5a5a5;
	}
	.side {
		display: flex;
		flex: none;
		flex-direction: column;
		align-items: flex-start;
		gap: 3px;
		width: 29px;
		padding: 4px 0 0 7px;
		background: #3a3a3a;
	}
	.side button {
		width: 18px;
		padding: 4px 0;
		border: 1px solid #2b2b2b;
		border-radius: 2px;
		background: #4e4e4e;
		font-weight: 600;
		writing-mode: vertical-rl;
	}

	.status {
		display: flex;
		align-items: center;
		flex: none;
		height: 23px;
		padding: 0 4px;
	}
	.coords {
		width: 103px;
	}
	.snap-grid {
		width: 66px;
	}
	.hotspot {
		width: 153px;
		border-right: 1px solid #333;
	}
	.info {
		padding-left: 4px;
		white-space: nowrap;
	}
	.status button {
		height: 17px;
		margin-left: auto;
		padding: 0 4px;
		border: 1px solid #2e2e2e;
		border-radius: 2px;
		background: #555;
	}
	.desk {
		display: flex;
		flex: none;
		height: 1px;
		margin-top: 7px;
		padding-left: 45px;
		background: #1d2b3a;
	}
	.desk span {
		width: 322px;
		background: #c4c4c4;
	}
</style>
